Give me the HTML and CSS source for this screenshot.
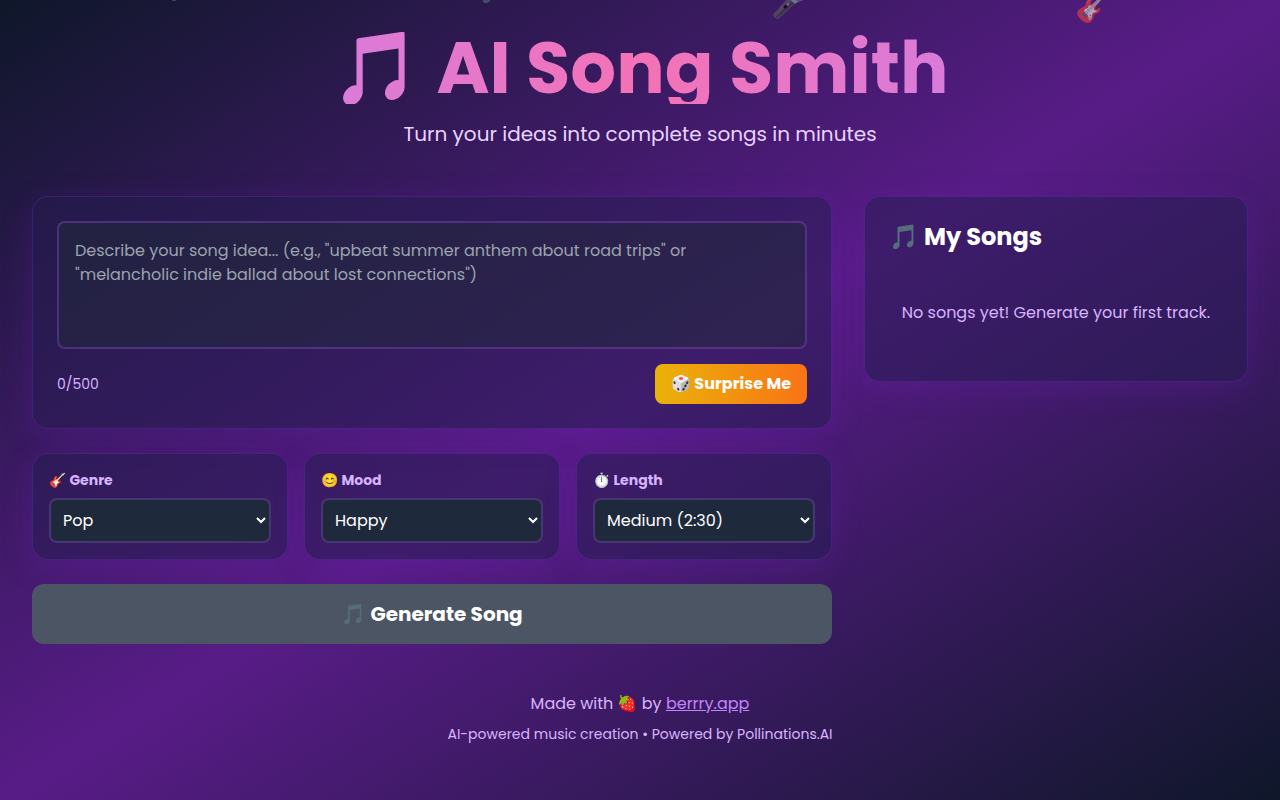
FILE: index.html
```html
<!DOCTYPE html>
<html lang="en">
<head>
    <meta charset="UTF-8">
    <meta name="viewport" content="width=device-width, initial-scale=1.0">
    <title>AI Song Smith</title>
    <link rel="stylesheet" href="styles.css">
</head>
<body>
    <div class="floating" aria-hidden="true">
        <span class="note note-1">🎵</span>
        <span class="note note-2">🎶</span>
        <span class="note note-3">🎤</span>
        <span class="note note-4">🎸</span>
    </div>

    <div class="container">
        <header class="header">
            <h1 class="title">🎵 AI Song Smith</h1>
            <p class="subtitle">Turn your ideas into complete songs in minutes</p>
        </header>

        <main class="layout">
            <div class="creator">
                <section class="card">
                    <textarea id="songIdea" class="idea" maxlength="500" aria-label="Song idea" placeholder="Describe your song idea... (e.g., &quot;upbeat summer anthem about road trips&quot; or &quot;melancholic indie ballad about lost connections&quot;)"></textarea>
                    <div class="idea-footer">
                        <span class="counter" id="charCount">0/500</span>
                        <button type="button" class="surprise">🎲 Surprise Me</button>
                    </div>
                </section>

                <section class="options">
                    <div class="card option">
                        <label for="genre">🎸 Genre</label>
                        <select id="genre">
                            <option>Pop</option>
                            <option>Rock</option>
                            <option>Jazz</option>
                        </select>
                    </div>
                    <div class="card option">
                        <label for="mood">😊 Mood</label>
                        <select id="mood">
                            <option>Happy</option>
                            <option>Sad</option>
                            <option>Calm</option>
                        </select>
                    </div>
                    <div class="card option">
                        <label for="length">⏱️ Length</label>
                        <select id="length">
                            <option>Medium (2:30)</option>
                        </select>
                    </div>
                </section>

                <button type="button" class="generate" disabled>🎵 Generate Song</button>
            </div>

            <aside class="card songs">
                <h2>🎵 My Songs</h2>
                <p class="empty">No songs yet! Generate your first track.</p>
            </aside>
        </main>

        <footer class="footer">
            <p>Made with 🍓 by <a href="#">berrry.app</a></p>
            <p class="powered">AI-powered music creation • Powered by Pollinations.AI</p>
        </footer>
    </div>
</body>
</html>
```
FILE: styles.css
```css
* {
    box-sizing: border-box;
    margin: 0;
}
body {
    min-height: 100vh;
    font-family: Poppins, Inter, "Noto Color Emoji", sans-serif;
    font-size: 16px;
    line-height: 24px;
    color: white;
    background: linear-gradient(to bottom right, #0f172a, #581c87, #0f172a) fixed;
}
.container {
    position: relative;
    padding: 32px;
}

.floating {
    position: absolute;
    top: 0;
    left: 0;
    right: 0;
    height: 100%;
    overflow: hidden;
    pointer-events: none;
}
.note {
    position: absolute;
    font-size: 30px;
    line-height: 40px;
    opacity: 0.6;
}
.note-1 { left: 13%; top: -34px; }
.note-2 { left: 37%; top: -29px; }
.note-3 { left: 60.3%; top: -17px; }
.note-4 { left: 84%; top: -13px; }

.header {
    text-align: center;
    margin-bottom: 48px;
}
.title {
    font-size: 72px;
    line-height: 72px;
    font-weight: 700;
    margin-bottom: 16px;
    background: linear-gradient(to right, #c084fc, #f472b6, #c084fc);
    -webkit-background-clip: text;
    background-clip: text;
    color: transparent;
}
.subtitle {
    font-size: 20px;
    line-height: 28px;
    color: #e9d5ff;
}

.layout {
    display: grid;
    grid-template-columns: repeat(3, 1fr);
    gap: 32px;
    align-items: start;
}
.creator {
    grid-column: span 2;
    display: flex;
    flex-direction: column;
    gap: 24px;
}
.card {
    padding: 24px;
    background: rgba(36, 28, 80, 0.5);
    border: 1px solid rgba(147, 70, 240, 0.2);
    border-radius: 16px;
    box-shadow: 0 8px 32px rgba(126, 34, 206, 0.2);
}
.idea {
    display: block;
    width: 100%;
    height: 128px;
    padding: 16px;
    font: inherit;
    color: white;
    background: rgba(31, 41, 55, 0.5);
    border: 2px solid rgba(168, 85, 247, 0.3);
    border-radius: 8px;
    resize: none;
}
.idea::placeholder {
    color: #9ca3af;
}
.idea-footer {
    display: flex;
    justify-content: space-between;
    align-items: center;
    margin-top: 15px;
}
.counter {
    font-size: 14px;
    color: #d8b4fe;
}
button {
    border: none;
    font-family: inherit;
    font-weight: 700;
    color: white;
}
.surprise {
    padding: 8px 16px;
    font-size: 16px;
    line-height: 24px;
    background: linear-gradient(to right, #eab308, #f97316);
    border-radius: 8px;
    cursor: pointer;
}
.options {
    display: grid;
    grid-template-columns: repeat(3, 1fr);
    gap: 16px;
}
.option {
    padding: 16px;
}
.option label {
    display: block;
    font-size: 14px;
    line-height: 20px;
    font-weight: 700;
    color: #d8b4fe;
    margin-bottom: 8px;
}
.option select {
    display: block;
    width: 100%;
    height: 45px;
    padding: 8px;
    font: inherit;
    color: white;
    background-color: #1e293b;
    border: 2px solid rgba(168, 85, 247, 0.3);
    border-radius: 8px;
}
.generate {
    padding: 16px;
    font-size: 20px;
    line-height: 28px;
    background: #4b5563;
    border-radius: 12px;
}
.songs h2 {
    font-size: 24px;
    line-height: 32px;
    margin-bottom: 16px;
}
.empty {
    padding: 32px 0;
    text-align: center;
    color: #d8b4fe;
}

.footer {
    margin-top: 48px;
    text-align: center;
    color: #d8b4fe;
}
.footer a {
    color: #c084fc;
}
.powered {
    margin-top: 8px;
    font-size: 14px;
    line-height: 20px;
}
```
